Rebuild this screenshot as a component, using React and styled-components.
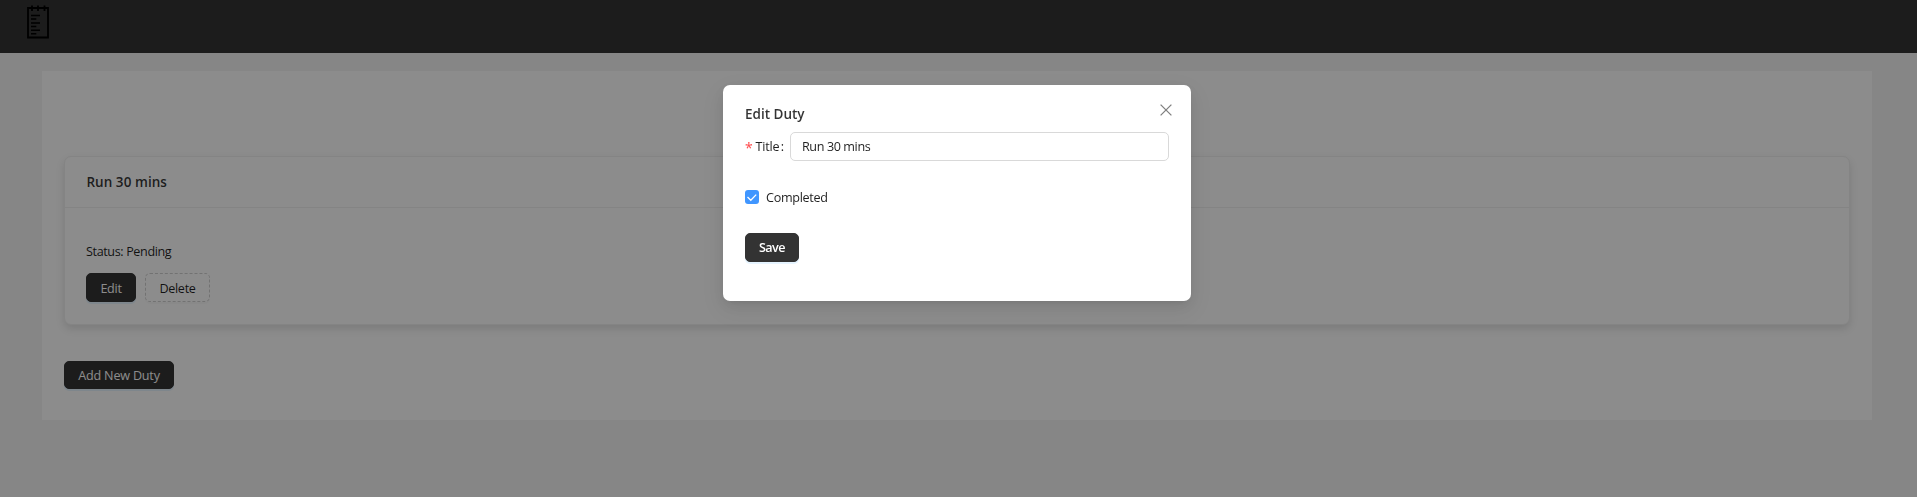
import React from 'react';
import styled, { createGlobalStyle } from 'styled-components';

const GlobalStyle = createGlobalStyle`
  * { box-sizing: border-box; }
  body {
    margin: 0;
    background: #f5f5f5;
    color: rgba(0, 0, 0, 0.88);
    font: 12.6px/20px 'Open Sans', 'Noto Sans', sans-serif;
  }
`;

const Page = styled.div`
  height: 497px;
  overflow: hidden;
`;

const Header = styled.header`
  height: 53px;
  padding: 5px 0 0 27px;
  background: #333;
`;

const Logo = styled.svg`
  display: block;
  width: 22px;
  height: 34px;
`;

const Content = styled.main`
  margin: 18px 45px 0 42px;
  padding: 85px 22px 0;
  height: 349px;
  background: #fff;
`;

const Card = styled.section`
  height: 169px;
  border: 1px solid #f0f0f0;
  border-radius: 7px;
  margin-bottom: 36px;
  background: #fff;
  box-shadow: 0 4px 8px rgba(0, 0, 0, 0.12);
`;

const CardHeader = styled.div`
  height: 51px;
  padding: 14px 21.4px 0;
  border-bottom: 1px solid #f0f0f0;
`;

const CardBody = styled.div`
  padding: 34px 21px 0;
`;

const Heading = styled.h3`
  margin: 0;
  font-size: 13.5px;
  line-height: 22px;
  font-weight: 600;
  color: rgba(0, 0, 0, 0.8);
  letter-spacing: ${(p) => p.$track || 0}px;
`;

const Text = styled.span`
  display: block;
  white-space: nowrap;
  letter-spacing: ${(p) => p.$track || 0}px;
`;

const Actions = styled.div`
  display: flex;
  gap: 9px;
  margin-top: 11px;

  button { padding-top: 2px; }
`;

const Button = styled.button`
  display: flex;
  align-items: center;
  justify-content: center;
  width: ${(p) => p.$width}px;
  height: ${(p) => p.$height || 29}px;
  padding: 1px 0 0;
  border: 1px ${(p) => (p.$dashed ? 'dashed #d0d0d0' : 'solid #333')};
  border-radius: 5px;
  background: ${(p) => (p.$dashed ? '#fff' : '#333')};
  color: ${(p) => (p.$dashed ? 'rgba(0, 0, 0, 0.88)' : '#fff')};
  box-shadow: 0 2px 0 ${(p) => (p.$dashed ? 'rgba(0, 0, 0, 0.02)' : 'rgba(5, 145, 255, 0.1)')};
  font: inherit;
  font-weight: ${(p) => p.$weight || 400};
`;

const Mask = styled.div`
  position: fixed;
  inset: 0;
  padding: 85px 3px 0 0;
  background: rgba(0, 0, 0, 0.45);
`;

const Dialog = styled.div`
  position: relative;
  width: 468px;
  height: 216px;
  margin: 0 auto;
  padding: 18px 22px;
  border-radius: 7px;
  background: #fff;
  box-shadow: 0 5px 14px rgba(0, 0, 0, 0.08), 0 3px 6px -4px rgba(0, 0, 0, 0.12),
    0 8px 25px 7px rgba(0, 0, 0, 0.05);
`;

const CloseButton = styled.button`
  position: absolute;
  top: 19px;
  right: 19px;
  width: 12px;
  height: 12px;
  padding: 0;
  border: 0;
  background: none;
  color: #808080;

  svg { display: block; }
`;

const Field = styled.div`
  display: flex;
  align-items: center;
  height: 29px;
  margin-top: 7px;
`;

const Required = styled.span`
  width: 10.5px;
  padding-top: 3px;
  color: #ff4d4f;
  font-family: 'Noto Sans', sans-serif;
  font-size: 14px;
`;

const Label = styled(Text)`
  display: flex;
  gap: 1.5px;
  width: 34.5px;
`;

const Input = styled.input`
  flex: 1;
  min-width: 0;
  height: 29px;
  padding: 0 11px;
  border: 1px solid #d9d9d9;
  border-radius: 5px;
  background: #fff;
  color: rgba(0, 0, 0, 0.88);
  font: inherit;
  letter-spacing: ${(p) => p.$track || 0}px;
  outline: none;
`;

const CheckRow = styled.div`
  display: flex;
  align-items: center;
  gap: 7px;
  height: 20px;
  margin: 26px 0;

  ${Text} { padding-top: 1px; }
`;

const CheckBox = styled.span`
  width: 14px;
  height: 14px;
  border-radius: 3px;
  background: #4096ff;

  svg { display: block; }
`;

export default function App() {
  return (
    <>
      <GlobalStyle />
      <Page>
        <Header>
          <Logo viewBox="0 0 22 34" fill="none" stroke="#000">
            <path d="M1 3h20v29.5H1z" strokeWidth="1.8" />
            <path d="M5 .5v5.5M11 .5v5.5M17.5 .5v5.5" strokeWidth="1.8" />
            <path
              d="M4 10.5h9M4 14h5.3M4 18h9M4 21.5h5.3M4 25.2h9M4 28.7h5.3"
              strokeWidth="1.6"
            />
          </Logo>
        </Header>
        <Content>
          <Card>
            <CardHeader>
              <Heading $track={0.05}>Run 30 mins</Heading>
            </CardHeader>
            <CardBody>
              <Text $track={-0.38}>Status: Pending</Text>
              <Actions>
                <Button $width={50}><Text $track={-0.3}>Edit</Text></Button>
                <Button $width={65} $dashed><Text $track={-0.3}>Delete</Text></Button>
              </Actions>
            </CardBody>
          </Card>
          <Button $width={110} $height={28}><Text $track={-0.2}>Add New Duty</Text></Button>
        </Content>
      </Page>
      <Mask>
        <Dialog role="dialog">
          <Heading>Edit Duty</Heading>
          <CloseButton aria-label="Close">
            <svg width="12" height="12" viewBox="0 0 12 12" fill="none" stroke="currentColor" strokeWidth="1.3">
              <path d="M.6.6l10.8 10.8M11.4.6L.6 11.4" />
            </svg>
          </CloseButton>
          <Field>
            <Required>*</Required>
            <Label $track={-0.2}><span>Title</span><span>:</span></Label>
            <Input defaultValue="Run 30 mins" $track={-0.4} />
          </Field>
          <CheckRow>
            <CheckBox>
              <svg width="14" height="14" viewBox="0 0 14 14" fill="none" stroke="#fff" strokeWidth="1.3">
                <path d="M2.5 7l3.3 3.3L11.2 4.6" />
              </svg>
            </CheckBox>
            <Text $track={-0.3}>Completed</Text>
          </CheckRow>
          <Button $width={54} $weight={600}><Text $track={-0.5}>Save</Text></Button>
        </Dialog>
      </Mask>
    </>
  );
}
